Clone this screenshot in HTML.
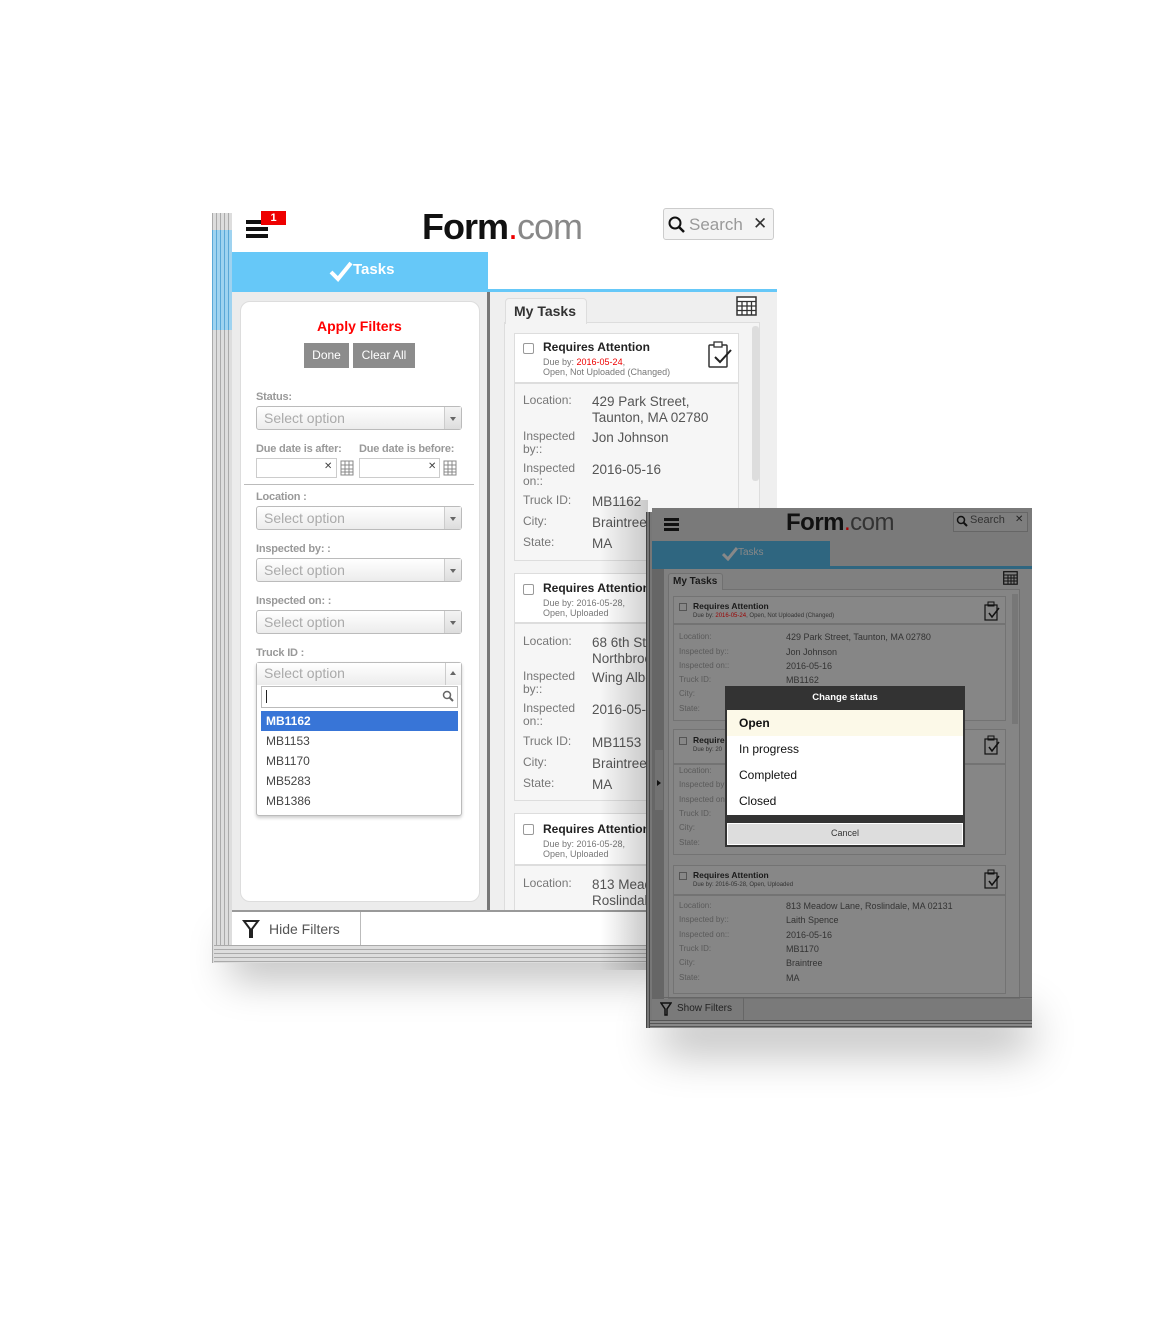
<!DOCTYPE html>
<html><head><meta charset="utf-8"><style>
*{box-sizing:border-box;margin:0;padding:0}
body{width:1166px;height:1326px;background:#fff;position:relative;overflow:hidden;font-family:"Liberation Sans",Arial,sans-serif}
.a{position:absolute}
.t{position:absolute;white-space:nowrap}
.sel{position:absolute;left:256px;width:206px;height:24px;border:1px solid #bbb;border-radius:3px;background:linear-gradient(#fff,#ececec);color:#aaa;font-size:14px;padding:3px 7px}
.sel:after{content:"";position:absolute;right:0;top:0;width:16px;height:22px;border-left:1px solid #ccc;background:linear-gradient(#f4f4f4,#ddd)}
.sel b{position:absolute;right:5px;top:10px;width:0;height:0;border-left:3px solid transparent;border-right:3px solid transparent;border-top:4px solid #666;z-index:2}
.lbl{position:absolute;left:256px;font-size:11px;color:#999;font-weight:bold;letter-spacing:-.2px}
.card{position:absolute;border:1px solid #ddd;background:#fff}
.k{position:absolute;font-size:12px;color:#777;line-height:13px}
.v{position:absolute;font-size:13.5px;color:#555;line-height:16px}
.cb{position:absolute;width:11px;height:11px;border:1px solid #999;border-radius:2px;background:#fff}
.k2{position:absolute;font-size:8px;color:#5a5a5a}
.v2{position:absolute;font-size:9px;color:#333}
</style></head><body>
<!-- shadows -->
<div class="a" style="left:230px;top:915px;width:560px;height:45px;background:#fff;box-shadow:0 20px 40px rgba(0,0,0,.25)"></div>
<div class="a" style="left:660px;top:990px;width:370px;height:36px;background:#888;box-shadow:0 25px 45px rgba(0,0,0,.3)"></div>

<!-- MAIN DEVICE -->
<div class="a" style="left:212px;top:213px;width:22px;height:750px;background:repeating-linear-gradient(90deg,#aaa 0 1px,#ddd 1px 4px)"></div>
<div class="a" style="left:214px;top:945px;width:440px;height:18px;background:repeating-linear-gradient(#aaa 0 1px,#ddd 1px 4px)"></div>
<div class="a" style="left:212px;top:230px;width:20px;height:100px;background:repeating-linear-gradient(90deg,#5aa8d8 0 1px,#9fd3f0 1px 4px)"></div>
<div class="a" style="left:232px;top:205px;width:545px;height:740px;background:#fff"></div>
<!-- header -->
<div class="a" style="left:246px;top:220px;width:22px;height:4px;background:#111"></div>
<div class="a" style="left:246px;top:227px;width:22px;height:4px;background:#111"></div>
<div class="a" style="left:246px;top:234px;width:22px;height:4px;background:#111"></div>
<div class="a" style="left:261px;top:211px;width:25px;height:14px;background:#e00;color:#fff;font-size:11px;font-weight:bold;text-align:center;line-height:14px">1</div>
<div class="t" style="left:422px;top:206px;font-size:36px;letter-spacing:-1px;color:#111"><span style="font-weight:bold">Form</span><span style="color:#e00">.</span><span style="color:#888">com</span></div>
<div class="a" style="left:663px;top:208px;width:111px;height:32px;border:1px solid #ccc;border-radius:3px;background:#f4f4f4"></div>
<svg class="a" style="left:668px;top:216px" width="18" height="18"><circle cx="7" cy="7" r="5.5" stroke="#111" stroke-width="2" fill="none"/><path d="M11 11L16 16" stroke="#111" stroke-width="2.5"/></svg>
<div class="t" style="left:689px;top:215px;font-size:17px;color:#999">Search</div>
<div class="t" style="left:753px;top:214px;font-size:17px;color:#333">✕</div>
<!-- tasks bar -->
<div class="a" style="left:232px;top:252px;width:256px;height:38px;background:#66c8f8"></div>
<div class="a" style="left:232px;top:289px;width:545px;height:3px;background:#66c8f8"></div>
<svg class="a" style="left:329px;top:260px" width="24" height="22"><path d="M2 12L9 19L22 3" stroke="#fff" stroke-width="4" fill="none"/></svg>
<div class="t" style="left:353px;top:261px;font-size:15px;color:#fff;font-weight:bold">Tasks</div>
<!-- left panel -->
<div class="a" style="left:232px;top:292px;width:255px;height:619px;background:#ececec"></div>
<div class="a" style="left:240px;top:301px;width:240px;height:601px;background:#fff;border:1px solid #ddd;border-radius:10px"></div>
<div class="t" style="left:317px;top:318px;font-size:14px;color:#f00;font-weight:bold">Apply Filters</div>
<div class="a" style="left:304px;top:343px;width:45px;height:25px;background:#8c8c8c;color:#fff;font-size:12px;text-align:center;line-height:25px">Done</div>
<div class="a" style="left:353px;top:343px;width:62px;height:25px;background:#8c8c8c;color:#fff;font-size:12px;text-align:center;line-height:25px">Clear All</div>
<div class="lbl" style="top:391px">Status:</div>
<div class="sel" style="top:406px">Select option<b></b></div>
<div class="lbl" style="top:443px">Due date is after:</div>
<div class="lbl" style="left:359px;top:443px">Due date is before:</div>
<div class="a" style="left:256px;top:458px;width:81px;height:20px;border:1px solid #ccc"></div>
<div class="t" style="left:324px;top:461px;font-size:10px;color:#444">✕</div>
<div class="a" style="left:359px;top:458px;width:81px;height:20px;border:1px solid #ccc"></div>
<div class="t" style="left:428px;top:461px;font-size:10px;color:#444">✕</div>
<svg class="a" style="left:340px;top:459px" width="14" height="17"><rect x="1" y="2" width="12" height="14" fill="none" stroke="#888"/><path d="M1 6H13M1 10H13M1 13H13M5 2V16M9 2V16" stroke="#888"/></svg>
<svg class="a" style="left:443px;top:459px" width="14" height="17"><rect x="1" y="2" width="12" height="14" fill="none" stroke="#888"/><path d="M1 6H13M1 10H13M1 13H13M5 2V16M9 2V16" stroke="#888"/></svg>
<div class="a" style="left:244px;top:484px;width:230px;height:1px;background:#bbb"></div>
<div class="lbl" style="top:491px">Location :</div>
<div class="sel" style="top:506px">Select option<b></b></div>
<div class="lbl" style="top:543px">Inspected by: :</div>
<div class="sel" style="top:558px">Select option<b></b></div>
<div class="lbl" style="top:595px">Inspected on: :</div>
<div class="sel" style="top:610px">Select option<b></b></div>
<div class="lbl" style="top:647px">Truck ID :</div>
<div class="a" style="left:256px;top:662px;width:206px;height:154px;border:1px solid #bbb;border-radius:3px;background:#fff;box-shadow:0 2px 3px rgba(0,0,0,.2)"></div>
<div class="a" style="left:257px;top:663px;width:204px;height:22px;background:linear-gradient(#fff,#ececec);color:#aaa;font-size:14px;padding:2px 7px">Select option</div>
<div class="a" style="left:445px;top:663px;width:16px;height:22px;border-left:1px solid #ccc"></div>
<div class="a" style="left:450px;top:671px;border-left:3px solid transparent;border-right:3px solid transparent;border-bottom:4px solid #666"></div>
<div class="a" style="left:261px;top:686px;width:197px;height:22px;border:1px solid #bbb"></div>
<div class="a" style="left:266px;top:690px;width:1px;height:13px;background:#222"></div>
<svg class="a" style="left:442px;top:690px" width="12" height="12"><circle cx="5" cy="5" r="3.5" stroke="#666" stroke-width="1.5" fill="none"/><path d="M7.5 7.5L11 11" stroke="#666" stroke-width="2"/></svg>
<div class="a" style="left:261px;top:711px;width:197px;height:20px;background:#3875d7;color:#fff;font-size:12px;font-weight:bold;padding:3px 5px">MB1162</div>
<div class="t" style="left:266px;top:734px;font-size:12px;color:#444">MB1153</div>
<div class="t" style="left:266px;top:754px;font-size:12px;color:#444">MB1170</div>
<div class="t" style="left:266px;top:774px;font-size:12px;color:#444">MB5283</div>
<div class="t" style="left:266px;top:794px;font-size:12px;color:#444">MB1386</div>
<!-- divider -->
<div class="a" style="left:487px;top:292px;width:3px;height:619px;background:#777"></div>
<div class="a" style="left:490px;top:560px;width:12px;height:85px;background:#ddd"></div>
<div class="a" style="left:492px;top:600px;border-top:4px solid transparent;border-bottom:4px solid transparent;border-right:5px solid #222"></div>
<!-- right panel -->
<div class="a" style="left:490px;top:292px;width:287px;height:619px;background:#efefef"></div>
<div class="a" style="left:504px;top:322px;width:256px;height:589px;border:1px solid #ddd;background:#f4f4f4"></div>
<div class="a" style="left:505px;top:298px;width:82px;height:26px;background:#f4f4f4;border:1px solid #ddd;border-bottom:none;border-radius:4px 4px 0 0"></div>
<div class="t" style="left:514px;top:303px;font-size:14px;font-weight:bold;color:#333">My Tasks</div>
<svg class="a" style="left:736px;top:296px" width="21" height="20"><rect x="1" y="1" width="19" height="18" fill="#fff" stroke="#333" stroke-width="1.5"/><path d="M1 5.5H20M1 10H20M1 14.5H20M6 5V19M11 5V19M15.5 5V19" stroke="#333" stroke-width="1.3"/></svg>
<div class="a" style="left:752px;top:326px;width:7px;height:155px;background:#ddd;border-radius:3px"></div>
<!-- card 1 -->
<div class="card" style="left:514px;top:333px;width:225px;height:50px"></div>
<div class="card" style="left:514px;top:383px;width:225px;height:178px;background:#f6f6f6"></div>
<div class="cb" style="left:523px;top:343px"></div>
<div class="t" style="left:543px;top:340px;font-size:12px;font-weight:bold;color:#222">Requires Attention</div>
<div class="t" style="left:543px;top:357px;font-size:9px;color:#777;line-height:10px">Due by: <span style="color:#e00">2016-05-24</span>,<br>Open, Not Uploaded (Changed)</div>
<svg class="a" style="left:707px;top:339px" width="26" height="30"><rect x="2" y="6" width="18" height="22" fill="none" stroke="#333" stroke-width="1.5" rx="1"/><rect x="7" y="3" width="8" height="5" fill="#fff" stroke="#333" stroke-width="1.3"/><path d="M8 18L13 23L24 11" stroke="#222" stroke-width="2" fill="none"/></svg>
<div class="k" style="left:523px;top:394px">Location:</div><div class="v" style="left:592px;top:394px">429 Park Street,<br>Taunton, MA 02780</div>
<div class="k" style="left:523px;top:430px">Inspected<br>by::</div><div class="v" style="left:592px;top:430px">Jon Johnson</div>
<div class="k" style="left:523px;top:462px">Inspected<br>on::</div><div class="v" style="left:592px;top:462px">2016-05-16</div>
<div class="k" style="left:523px;top:494px">Truck ID:</div><div class="v" style="left:592px;top:494px">MB1162</div>
<div class="k" style="left:523px;top:515px">City:</div><div class="v" style="left:592px;top:515px">Braintree</div>
<div class="k" style="left:523px;top:536px">State:</div><div class="v" style="left:592px;top:536px">MA</div>
<!-- card 2 -->
<div class="card" style="left:514px;top:573px;width:225px;height:50px"></div>
<div class="card" style="left:514px;top:623px;width:225px;height:178px;background:#f6f6f6"></div>
<div class="cb" style="left:523px;top:584px"></div>
<div class="t" style="left:543px;top:581px;font-size:12px;font-weight:bold;color:#222">Requires Attention</div>
<div class="t" style="left:543px;top:598px;font-size:9px;color:#777;line-height:10px">Due by: 2016-05-28,<br>Open, Uploaded</div>
<div class="k" style="left:523px;top:635px">Location:</div><div class="v" style="left:592px;top:635px">68 6th Street,<br>Northbrook</div>
<div class="k" style="left:523px;top:670px">Inspected<br>by::</div><div class="v" style="left:592px;top:670px">Wing Albert</div>
<div class="k" style="left:523px;top:702px">Inspected<br>on::</div><div class="v" style="left:592px;top:702px">2016-05-20</div>
<div class="k" style="left:523px;top:735px">Truck ID:</div><div class="v" style="left:592px;top:735px">MB1153</div>
<div class="k" style="left:523px;top:756px">City:</div><div class="v" style="left:592px;top:756px">Braintree</div>
<div class="k" style="left:523px;top:777px">State:</div><div class="v" style="left:592px;top:777px">MA</div>
<!-- card 3 -->
<div class="card" style="left:514px;top:813px;width:225px;height:52px"></div>
<div class="card" style="left:514px;top:865px;width:225px;height:46px;background:#f6f6f6"></div>
<div class="cb" style="left:523px;top:824px"></div>
<div class="t" style="left:543px;top:822px;font-size:12px;font-weight:bold;color:#222">Requires Attention</div>
<div class="t" style="left:543px;top:839px;font-size:9px;color:#777;line-height:10px">Due by: 2016-05-28,<br>Open, Uploaded</div>
<div class="k" style="left:523px;top:877px">Location:</div><div class="v" style="left:592px;top:877px">813 Meadow Lane,<br>Roslindale</div>
<!-- bottom bar -->
<div class="a" style="left:232px;top:910px;width:545px;height:2px;background:#999"></div>
<div class="a" style="left:232px;top:912px;width:545px;height:33px;background:linear-gradient(90deg,#fff 70%,#ccc)"></div>
<div class="a" style="left:360px;top:912px;width:1px;height:33px;background:#bbb"></div>
<svg class="a" style="left:242px;top:919px" width="18" height="20"><path d="M2 2H16L10 10V18H8V10Z" fill="none" stroke="#222" stroke-width="2"/></svg>
<div class="t" style="left:269px;top:921px;font-size:14px;color:#555">Hide Filters</div>
<div class="a" style="left:600px;top:500px;width:48px;height:470px;background:linear-gradient(90deg,rgba(0,0,0,0),rgba(0,0,0,.18))"></div>

<!-- SECOND DEVICE -->
<div class="a" style="left:646px;top:512px;width:8px;height:516px;background:repeating-linear-gradient(90deg,#444 0 1px,#777 1px 3px)"></div>
<div class="a" style="left:650px;top:1020px;width:382px;height:8px;background:repeating-linear-gradient(#555 0 1px,#888 1px 3px)"></div>
<div class="a" style="left:652px;top:508px;width:380px;height:512px;background:#7a7a7a"></div>
<div class="a" style="left:664px;top:518px;width:15px;height:2.5px;background:#111"></div>
<div class="a" style="left:664px;top:523px;width:15px;height:2.5px;background:#111"></div>
<div class="a" style="left:664px;top:528px;width:15px;height:2.5px;background:#111"></div>
<div class="t" style="left:786px;top:509px;font-size:24px;letter-spacing:-.5px;color:#111"><span style="font-weight:bold">Form</span><span style="color:#a00">.</span><span style="color:#333">com</span></div>
<div class="a" style="left:953px;top:512px;width:75px;height:20px;border:1px solid #666;background:#7e7e7e"></div>
<svg class="a" style="left:956px;top:515px" width="12" height="12"><circle cx="5" cy="5" r="3.5" stroke="#111" stroke-width="1.5" fill="none"/><path d="M7.5 7.5L11 11" stroke="#111" stroke-width="2"/></svg>
<div class="t" style="left:970px;top:514px;font-size:11px;color:#333">Search</div>
<div class="t" style="left:1015px;top:514px;font-size:10px;color:#222">✕</div>
<div class="a" style="left:652px;top:541px;width:178px;height:26px;background:#2f6680"></div>
<div class="a" style="left:652px;top:566px;width:380px;height:3px;background:#2f6680"></div>
<svg class="a" style="left:722px;top:546px" width="16" height="15"><path d="M1 8L6 13L15 2" stroke="#888" stroke-width="3" fill="none"/></svg>
<div class="t" style="left:738px;top:547px;font-size:10px;color:#888">Tasks</div>
<div class="a" style="left:652px;top:569px;width:12px;height:430px;background:#666"></div>
<div class="a" style="left:655px;top:750px;width:8px;height:60px;background:#727272"></div>
<div class="a" style="left:657px;top:780px;border-top:3px solid transparent;border-bottom:3px solid transparent;border-left:4px solid #111"></div>
<div class="a" style="left:664px;top:569px;width:368px;height:430px;background:#808080"></div>
<div class="a" style="left:668px;top:589px;width:352px;height:410px;border:1px solid #707070;background:#858585"></div>
<div class="a" style="left:668px;top:573px;width:55px;height:17px;background:#858585;border:1px solid #707070;border-bottom:none;border-radius:3px 3px 0 0"></div>
<div class="t" style="left:673px;top:576px;font-size:10px;font-weight:bold;color:#1a1a1a">My Tasks</div>
<svg class="a" style="left:1003px;top:571px" width="15" height="14"><rect x=".7" y=".7" width="13.5" height="12.5" fill="none" stroke="#111" stroke-width="1.2"/><path d="M1 4H14M1 7H14M1 10H14M5 4V13M8 4V13M11 4V13" stroke="#111"/></svg>
<div class="a" style="left:1012px;top:594px;width:6px;height:130px;background:#777"></div>
<!-- cards -->
<div class="a" style="left:673px;top:596px;width:333px;height:28px;border:1px solid #737373;background:#878787"></div>
<div class="a" style="left:673px;top:624px;width:333px;height:97px;border:1px solid #737373;background:#868686"></div>
<div class="a" style="left:673px;top:729px;width:333px;height:35px;border:1px solid #737373;background:#878787"></div>
<div class="a" style="left:673px;top:764px;width:333px;height:91px;border:1px solid #737373;background:#868686"></div>
<div class="a" style="left:673px;top:865px;width:333px;height:30px;border:1px solid #737373;background:#878787"></div>
<div class="a" style="left:673px;top:895px;width:333px;height:99px;border:1px solid #737373;background:#868686"></div>
<div class="a" style="left:679px;top:603px;width:8px;height:8px;border:1px solid #555"></div>
<div class="t" style="left:693px;top:601px;font-size:8.5px;font-weight:bold;color:#1a1a1a">Requires Attention</div>
<div class="t" style="left:693px;top:613px;font-size:6px;color:#333">Due by: <span style="color:#900">2016-05-24</span>, Open, Not Uploaded (Changed)</div>
<div class="a" style="left:679px;top:737px;width:8px;height:8px;border:1px solid #555"></div>
<div class="t" style="left:693px;top:735px;font-size:8.5px;font-weight:bold;color:#1a1a1a">Requires</div>
<div class="t" style="left:693px;top:747px;font-size:6px;color:#333">Due by: 20</div>
<div class="a" style="left:679px;top:872px;width:8px;height:8px;border:1px solid #555"></div>
<div class="t" style="left:693px;top:870px;font-size:8.5px;font-weight:bold;color:#1a1a1a">Requires Attention</div>
<div class="t" style="left:693px;top:882px;font-size:6px;color:#333">Due by: 2016-05-28, Open, Uploaded</div>
<svg class="a" style="left:983px;top:600px" width="18" height="22"><rect x="2" y="5" width="12" height="15" fill="none" stroke="#111" stroke-width="1.2"/><rect x="5" y="2" width="6" height="4" fill="none" stroke="#111"/><path d="M6 13L9 17L16 8" stroke="#111" stroke-width="1.5" fill="none"/></svg>
<svg class="a" style="left:983px;top:734px" width="18" height="22"><rect x="2" y="5" width="12" height="15" fill="none" stroke="#111" stroke-width="1.2"/><rect x="5" y="2" width="6" height="4" fill="none" stroke="#111"/><path d="M6 13L9 17L16 8" stroke="#111" stroke-width="1.5" fill="none"/></svg>
<svg class="a" style="left:983px;top:868px" width="18" height="22"><rect x="2" y="5" width="12" height="15" fill="none" stroke="#111" stroke-width="1.2"/><rect x="5" y="2" width="6" height="4" fill="none" stroke="#111"/><path d="M6 13L9 17L16 8" stroke="#111" stroke-width="1.5" fill="none"/></svg>
<div class="k2" style="left:679px;top:632px">Location:</div><div class="v2" style="left:786px;top:632px">429 Park Street, Taunton, MA 02780</div>
<div class="k2" style="left:679px;top:647px">Inspected by::</div><div class="v2" style="left:786px;top:647px">Jon Johnson</div>
<div class="k2" style="left:679px;top:661px">Inspected on::</div><div class="v2" style="left:786px;top:661px">2016-05-16</div>
<div class="k2" style="left:679px;top:675px">Truck ID:</div><div class="v2" style="left:786px;top:675px">MB1162</div>
<div class="k2" style="left:679px;top:689px">City:</div>
<div class="k2" style="left:679px;top:704px">State:</div>
<div class="k2" style="left:679px;top:766px">Location:</div>
<div class="k2" style="left:679px;top:780px">Inspected by:</div>
<div class="k2" style="left:679px;top:795px">Inspected on:</div>
<div class="k2" style="left:679px;top:809px">Truck ID:</div>
<div class="k2" style="left:679px;top:823px">City:</div>
<div class="k2" style="left:679px;top:838px">State:</div>
<div class="k2" style="left:679px;top:901px">Location:</div><div class="v2" style="left:786px;top:901px">813 Meadow Lane, Roslindale, MA 02131</div>
<div class="k2" style="left:679px;top:915px">Inspected by::</div><div class="v2" style="left:786px;top:915px">Laith Spence</div>
<div class="k2" style="left:679px;top:930px">Inspected on::</div><div class="v2" style="left:786px;top:930px">2016-05-16</div>
<div class="k2" style="left:679px;top:944px">Truck ID:</div><div class="v2" style="left:786px;top:944px">MB1170</div>
<div class="k2" style="left:679px;top:958px">City:</div><div class="v2" style="left:786px;top:958px">Braintree</div>
<div class="k2" style="left:679px;top:973px">State:</div><div class="v2" style="left:786px;top:973px">MA</div>
<!-- bottom -->
<div class="a" style="left:652px;top:997px;width:380px;height:1px;background:#666"></div>
<div class="a" style="left:743px;top:998px;width:1px;height:22px;background:#666"></div>
<svg class="a" style="left:660px;top:1002px" width="12" height="14"><path d="M1 1H11L7 7V13H5V7Z" fill="none" stroke="#111" stroke-width="1.5"/></svg>
<div class="t" style="left:677px;top:1003px;font-size:10px;color:#222">Show Filters</div>
<!-- modal -->
<div class="a" style="left:725px;top:686px;width:240px;height:161px;background:#333"></div>
<div class="t" style="left:725px;top:692px;width:240px;text-align:center;font-size:9.5px;font-weight:bold;color:#fff">Change status</div>
<div class="a" style="left:727px;top:710px;width:236px;height:105px;background:#fff"></div>
<div class="a" style="left:727px;top:710px;width:236px;height:26px;background:#fcf9e8"></div>
<div class="t" style="left:739px;top:716px;font-size:12px;font-weight:bold;color:#111">Open</div>
<div class="t" style="left:739px;top:742px;font-size:12px;color:#111">In progress</div>
<div class="t" style="left:739px;top:768px;font-size:12px;color:#111">Completed</div>
<div class="t" style="left:739px;top:794px;font-size:12px;color:#111">Closed</div>
<div class="a" style="left:727px;top:823px;width:236px;height:22px;background:#ddd;border:1px solid #fff"></div>
<div class="t" style="left:725px;top:828px;width:240px;text-align:center;font-size:9px;color:#333">Cancel</div>
</body></html>
